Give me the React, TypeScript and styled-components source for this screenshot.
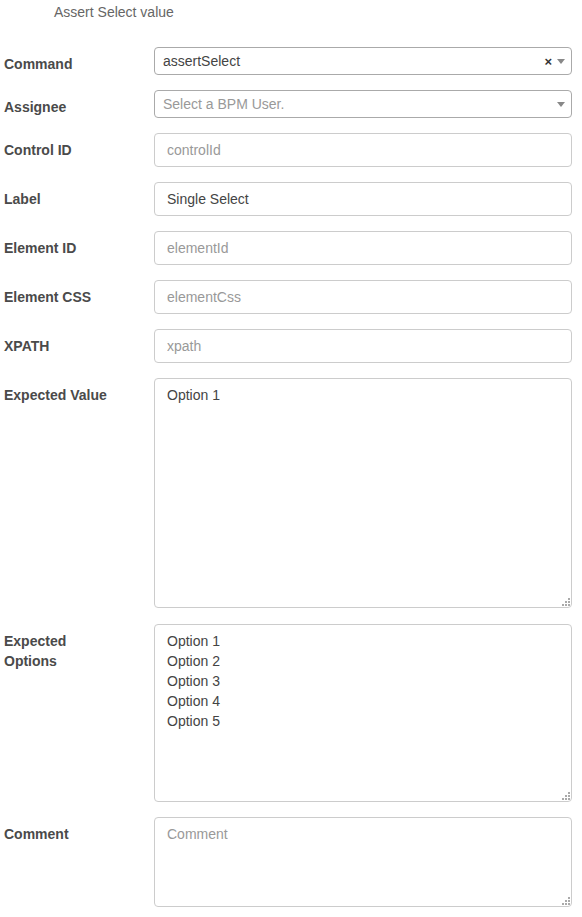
import React from "react";
import styled, { createGlobalStyle } from "styled-components";

const Global = createGlobalStyle`
  html, body { margin: 0; padding: 0; background: #fff; }
  body { font-family: "Liberation Sans", Arial, sans-serif; }
  * { box-sizing: border-box; }
`;

const Page = styled.div`
  width: 582px;
  padding: 0 10px 0 4px;
`;

const Title = styled.div`
  padding: 2px 0 0 50px;
  height: 47px;
  font-size: 14px;
  line-height: 20px;
  color: #666;
`;

const Form = styled.div`
  display: flex;
  flex-direction: column;
  gap: 15px;
`;

const Row = styled.div<{ $gapTop?: number }>`
  display: grid;
  grid-template-columns: 150px 418px;
  margin-top: ${(p) => p.$gapTop ?? 0}px;
`;

const Label = styled.label`
  padding-top: 7px;
  max-width: 104px;
  font-size: 14px;
  font-weight: bold;
  line-height: 20px;
  color: #4a4a4a;
`;

const SelectBox = styled.div`
  position: relative;
  height: 28px;
  border: 1px solid #aaa;
  border-radius: 4px;
  padding: 1px 30px 0 8px;
  font-size: 14px;
  line-height: 25px;
  display: flex;
  align-items: center;
`;

const SelectText = styled.span<{ $placeholder?: boolean }>`
  flex: 1;
  color: ${(p) => (p.$placeholder ? "#999" : "#444")};
`;

const Clear = styled.span`
  position: absolute;
  right: 19px;
  top: 1px;
  font-size: 13px;
  font-weight: bold;
  color: #333;
  line-height: 26px;
`;

const Arrow = styled.span`
  position: absolute;
  right: 6px;
  top: 11px;
  width: 0;
  height: 0;
  border-left: 4px solid transparent;
  border-right: 4px solid transparent;
  border-top: 5px solid #888;
`;

const Input = styled.input`
  width: 100%;
  height: 34px;
  border: 1px solid #ccc;
  border-radius: 4px;
  padding: 6px 12px;
  font-family: inherit;
  font-size: 14px;
  line-height: 20px;
  color: #444;
  outline: none;
  &::placeholder { color: #999; }
`;

const AreaWrap = styled.div`
  position: relative;
`;

const Area = styled.textarea<{ $h: number }>`
  display: block;
  width: 100%;
  height: ${(p) => p.$h}px;
  border: 1px solid #ccc;
  border-radius: 4px;
  padding: 6px 12px;
  font-family: inherit;
  font-size: 14px;
  line-height: 20px;
  color: #444;
  resize: none;
  outline: none;
  overflow: hidden;
  &::placeholder { color: #999; }
`;

const Grip = styled.svg`
  position: absolute;
  right: 2px;
  bottom: 2px;
  width: 8px;
  height: 8px;
`;

const ResizeGrip = () => (
  <Grip viewBox="0 0 8 8">
    {[
      [6, 0],
      [3, 3],
      [6, 3],
      [0, 6],
      [3, 6],
      [6, 6],
    ].map(([x, y], i) => (
      <rect key={i} x={x} y={y} width={2} height={2} fill="#aaa" />
    ))}
  </Grip>
);

const TextArea = ({ h, value, placeholder }: { h: number; value?: string; placeholder?: string }) => (
  <AreaWrap>
    <Area $h={h} readOnly value={value ?? ""} placeholder={placeholder} />
    <ResizeGrip />
  </AreaWrap>
);

export default function App() {
  return (
    <Page>
      <Global />
      <Title>Assert Select value</Title>
      <Form>
        <Row>
          <Label>Command</Label>
          <SelectBox>
            <SelectText>assertSelect</SelectText>
            <Clear>×</Clear>
            <Arrow />
          </SelectBox>
        </Row>
        <Row>
          <Label>Assignee</Label>
          <SelectBox>
            <SelectText $placeholder>Select a BPM User.</SelectText>
            <Arrow />
          </SelectBox>
        </Row>
        <Row>
          <Label>Control ID</Label>
          <Input readOnly placeholder="controlId" />
        </Row>
        <Row>
          <Label>Label</Label>
          <Input readOnly value="Single Select" />
        </Row>
        <Row>
          <Label>Element ID</Label>
          <Input readOnly placeholder="elementId" />
        </Row>
        <Row>
          <Label>Element CSS</Label>
          <Input readOnly placeholder="elementCss" />
        </Row>
        <Row>
          <Label>XPATH</Label>
          <Input readOnly placeholder="xpath" />
        </Row>
        <Row>
          <Label>Expected Value</Label>
          <TextArea h={230} value="Option 1" />
        </Row>
        <Row $gapTop={1}>
          <Label>Expected Options</Label>
          <TextArea h={178} value={"Option 1\nOption 2\nOption 3\nOption 4\nOption 5"} />
        </Row>
        <Row>
          <Label>Comment</Label>
          <TextArea h={90} placeholder="Comment" />
        </Row>
      </Form>
    </Page>
  );
}
